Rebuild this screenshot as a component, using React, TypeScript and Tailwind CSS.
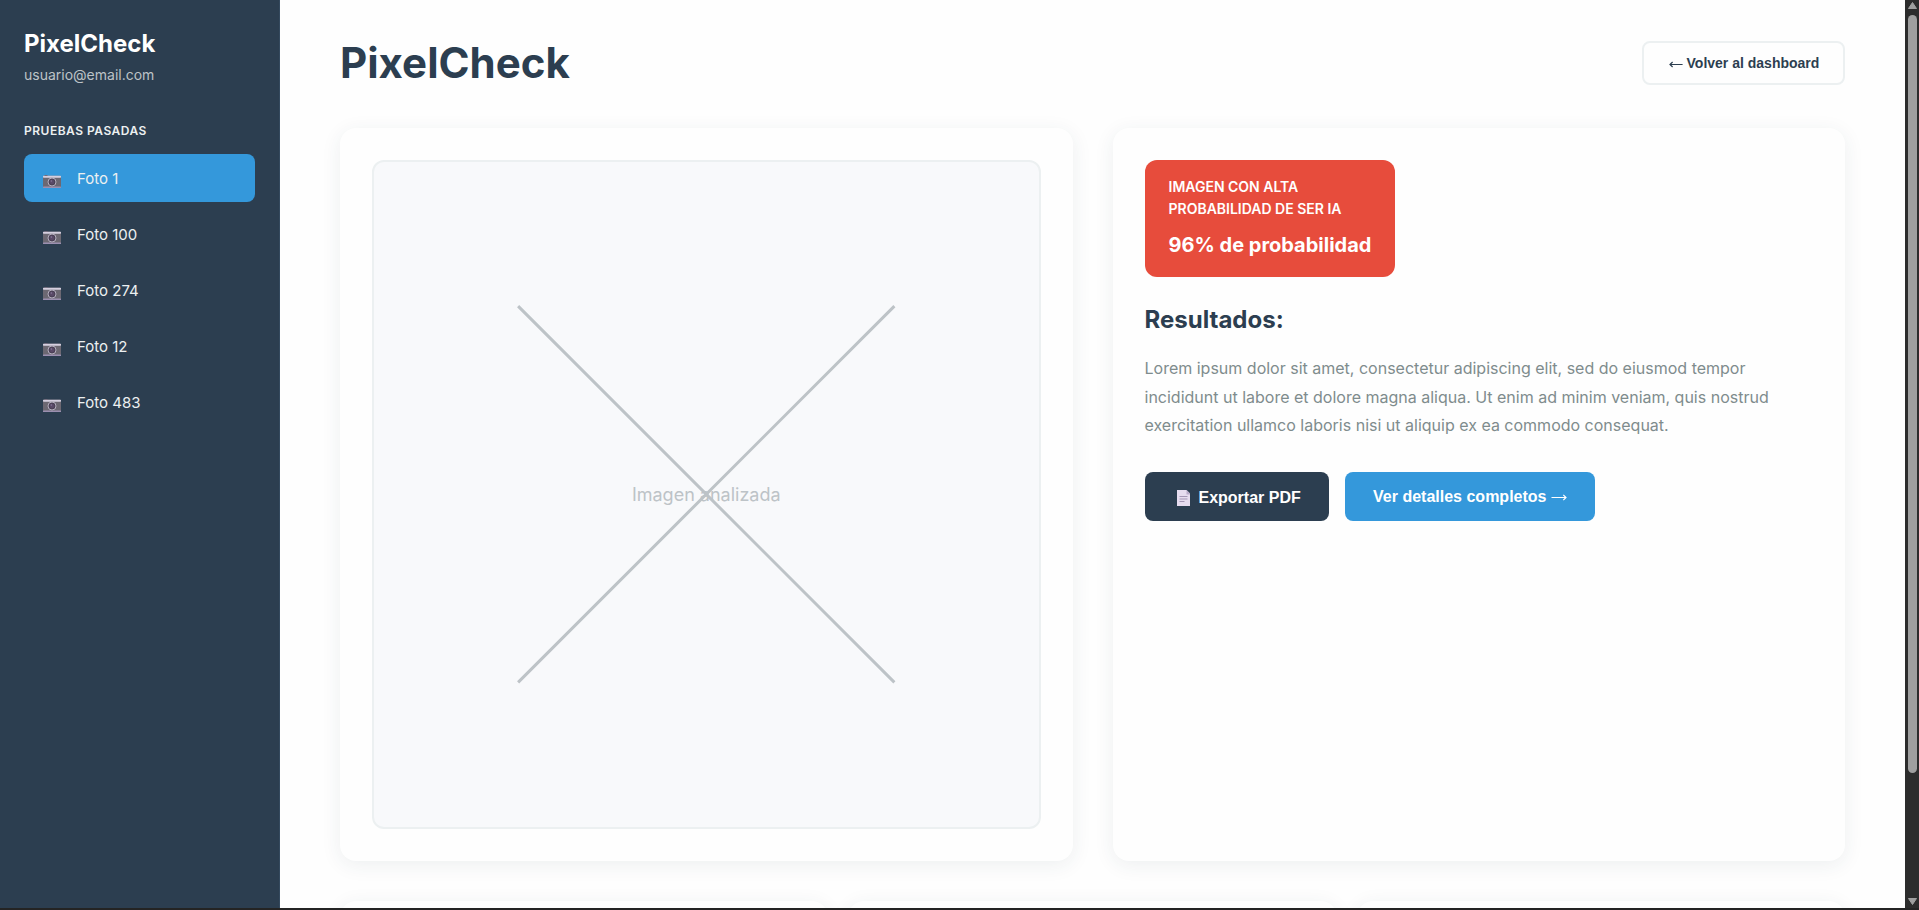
const photos = ["Foto 1", "Foto 100", "Foto 274", "Foto 12", "Foto 483"];

function CameraIcon() {
  return (
    <svg className="mt-[5px] block h-[13px] w-[18px] shrink-0" viewBox="0 0 18 13">
      <rect x="1.5" y="0" width="3" height="1" fill="#4d4558" />
      <rect x="0" y="0.7" width="18" height="12.3" rx="0.8" fill="#6c6872" />
      <rect x="0" y="0.7" width="18" height="2" rx="0.6" fill="#d5cfdf" />
      <rect x="0" y="11.4" width="18" height="1.6" rx="0.6" fill="#9b8fb0" />
      <circle cx="9" cy="7" r="4" fill="#4b4156" stroke="#b3adbd" strokeWidth="1" />
      <circle cx="9" cy="7" r="2.2" fill="#5a4a68" />
      <circle cx="8.3" cy="6" r="0.7" fill="#8c7fa0" />
    </svg>
  );
}

function DocumentIcon() {
  return (
    <svg className="block h-4 w-[13px] shrink-0" viewBox="0 0 13 16">
      <path d="M0 0H9.5L13 3.5V16H0Z" fill="#e6dcef" />
      <path d="M9.5 0L13 3.5V4.5H9.5Z" fill="#b9abc9" />
      <path d="M2.5 6.5H10.5M2.5 9H10.5M2.5 11.5H7.5" stroke="#a597b5" strokeWidth="1" />
    </svg>
  );
}

function Sidebar() {
  return (
    <aside className="flex w-[280px] shrink-0 flex-col border-r border-[#34495e] bg-[#2c3e50] px-6 pt-[25px]">
      <div className="h-[38px] text-2xl leading-[38px] font-bold text-white">PixelCheck</div>
      <div className="mt-px h-[22px] text-sm leading-[22px] text-[#bdc3c7]">usuario@email.com</div>
      <div className="mt-[34px] h-[21px] text-xs leading-[21px] font-semibold tracking-[0.5px] text-[#ecf0f1]">
        PRUEBAS PASADAS
      </div>
      <nav className="mt-[13px] flex flex-col gap-2">
        {photos.map((name, i) => (
          <a
            key={name}
            className={
              i === 0
                ? "flex h-12 items-center gap-4 rounded-lg bg-[#3498db] pt-0.5 pl-[19px] text-[15px] text-[#ecf0f1]"
                : "flex h-12 items-center gap-4 rounded-lg pt-0.5 pl-[19px] text-[15px] text-[#ecf0f1]"
            }
          >
            <CameraIcon />
            <span>{name}</span>
          </a>
        ))}
      </nav>
    </aside>
  );
}

function Scrollbar() {
  return (
    <div className="flex w-[14px] shrink-0 flex-col items-center bg-[#2c2c2c] pt-[2px] pb-[3px] pl-px">
      <svg className="h-[7px] w-[9px]" viewBox="0 0 9 7">
        <path d="M4.5 0.5L8.5 6.5H0.5Z" fill="#9f9f9f" stroke="#9f9f9f" strokeLinejoin="round" />
      </svg>
      <div className="mt-[6px] h-[758px] w-[9px] rounded-full bg-[#9f9f9f]" />
      <div className="grow" />
      <svg className="h-[7px] w-[9px]" viewBox="0 0 9 7">
        <path d="M4.5 6.5L8.5 0.5H0.5Z" fill="#9f9f9f" stroke="#9f9f9f" strokeLinejoin="round" />
      </svg>
    </div>
  );
}

export default function App() {
  return (
    <div className="flex h-[910px] w-[1919px] flex-col overflow-hidden bg-[#242424] font-['Inter',sans-serif]">
      <div className="flex h-[908px] shrink-0 overflow-hidden">
        <Sidebar />
        <main className="flex grow flex-col overflow-hidden bg-[#fefefe] px-[60px]">
          <header className="flex h-[128px] shrink-0 items-center justify-between pb-[3px]">
            <h1 className="text-[42px] leading-[67px] font-bold text-[#2c3e50]">PixelCheck</h1>
            <button className="mt-px flex h-11 w-[203px] items-center justify-center rounded-lg border-2 border-[#ecf0f1] bg-[#fefefe] pl-px font-['Liberation_Sans',sans-serif] text-sm font-bold text-[#2c3e50]">
              <svg className="mt-0.5 h-[7px] w-[14px] shrink-0" viewBox="0 0 14 7" fill="none" stroke="currentColor">
                <path d="M1 3.5H13.6M3.6 1L1 3.5L3.6 6" strokeWidth="1.2" />
              </svg>
              &nbsp;Volver al dashboard
            </button>
          </header>

          <div className="grid h-[732.5px] shrink-0 grid-cols-2 gap-10">
            <section className="rounded-2xl bg-[#fefefe] p-8 shadow-[0_4px_20px_rgba(44,62,80,0.08)]">
              <div className="relative flex h-full items-center justify-center rounded-xl border-2 border-[#ecf0f1] bg-[#f8f9fb]">
                <span className="pt-0.5 text-lg text-[#bdc3c7]">Imagen analizada</span>
                <svg className="absolute inset-0 h-full w-full" viewBox="0 0 664 664">
                  <path d="M144 144L520 520M520 144L144 520" stroke="#bdc3c7" strokeWidth="3" />
                </svg>
              </div>
            </section>

            <section className="flex flex-col items-start rounded-2xl bg-[#fefefe] p-8 shadow-[0_4px_20px_rgba(44,62,80,0.08)]">
              <div className="w-[250px] rounded-xl bg-[#e74c3c] px-6 py-4 text-white">
                <div className="text-sm leading-[22.4px] font-semibold">
                  IMAGEN CON ALTA
                  <br />
                  PROBABILIDAD DE SER IA
                </div>
                <div className="mt-2 text-xl leading-8 font-bold whitespace-nowrap">96% de probabilidad</div>
              </div>
              <h2 className="mt-6 text-2xl leading-[38.4px] font-bold text-[#2c3e50]">Resultados:</h2>
              <p className="mt-[14.55px] text-base leading-[28.8px] text-[#7f8c8d]">
                Lorem ipsum dolor sit amet, consectetur adipiscing elit, sed do eiusmod tempor
                <br />
                incididunt ut labore et dolore magna aliqua. Ut enim ad minim veniam, quis nostrud
                <br />
                exercitation ullamco laboris nisi ut aliquip ex ea commodo consequat.
              </p>
              <div className="mt-[31.85px] flex gap-4 font-['Liberation_Sans',sans-serif] text-base font-bold text-white">
                <button className="flex h-[49px] w-[184px] items-center gap-[9px] rounded-lg bg-[#2c3e50] pt-0.5 pl-8">
                  <DocumentIcon />
                  <span>Exportar PDF</span>
                </button>
                <button className="flex h-[49px] w-[250px] items-center justify-center rounded-lg bg-[#3498db] pl-px">
                  Ver detalles completos&nbsp;
                  <svg className="mt-0.5 h-[7px] w-4 shrink-0" viewBox="0 0 16 7" fill="none" stroke="currentColor">
                    <path d="M0.5 3.5H15M12.3 0.8L15 3.5L12.3 6.2" strokeWidth="1.2" />
                  </svg>
                </button>
              </div>
            </section>
          </div>

          <div className="mt-10 grid shrink-0 grid-cols-3 gap-5">
            {[0, 1, 2].map((i) => (
              <div key={i} className="h-40 rounded-2xl bg-[#fefefe] shadow-[0_4px_20px_rgba(44,62,80,0.08)]" />
            ))}
          </div>
        </main>
        <Scrollbar />
      </div>
    </div>
  );
}
